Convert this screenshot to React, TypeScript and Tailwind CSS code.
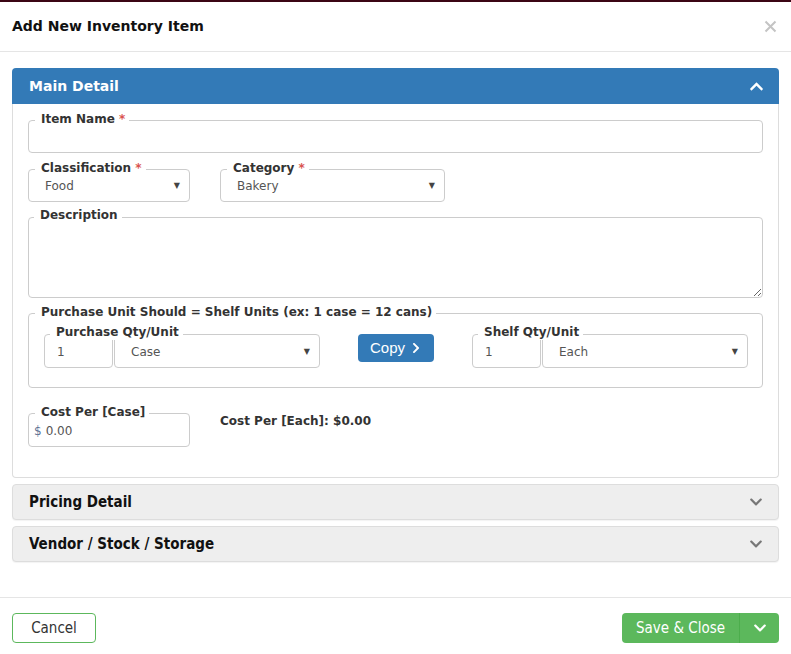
import React from "react";
import { FaChevronUp, FaChevronDown, FaChevronRight } from "react-icons/fa";

const condensed = "font-['DejaVu_Sans_Condensed','Liberation_Sans_Narrow',sans-serif]";

function Legend({ label, required }: { label: string; required?: boolean }) {
  return (
    <span className="absolute -top-[10px] left-[6px] bg-white pl-[6px] pr-[4px] text-[12px] font-bold leading-[16px] text-[#333] whitespace-nowrap">
      {label}
      {required && <span className="text-[#d9534f]"> *</span>}
    </span>
  );
}

function SelectBox({ value, className }: { value: string; className?: string }) {
  return (
    <div className={`flex items-center justify-between h-full pl-[16px] pr-[9px] text-[12px] text-[#555] ${className ?? ""}`}>
      <span>{value}</span>
      <span className="text-[8px] text-[#444]">▼</span>
    </div>
  );
}

function QtyUnit({ label, qty, unit }: { label: string; qty: string; unit: string }) {
  return (
    <div className="relative flex w-[276px] h-[34px]">
      <div className="w-[69px] h-full border border-[#ccc] rounded-[4px] flex items-center pl-[12px] pt-[2px] text-[12px] text-[#555]">
        {qty}
      </div>
      <div className="flex-1 ml-[1px] h-full border border-[#ccc] rounded-[4px] pt-[2px]">
        <SelectBox value={unit} />
      </div>
      <Legend label={label} />
    </div>
  );
}

function CollapsedPanel({ title }: { title: string }) {
  return (
    <div className="mt-[6px] h-[36px] bg-[#eee] border border-[#ddd] rounded-[4px] shadow-[0_1px_1px_rgba(0,0,0,0.05)] flex items-center justify-between pl-[16px] pr-[15px]">
      <span className={`${condensed} font-bold text-[15px] text-[#111]`}>{title}</span>
      <FaChevronDown className="text-[#777]" size={14} />
    </div>
  );
}

export default function App() {
  return (
    <div className="w-[791px] h-[654px] bg-white flex flex-col border-t-2 border-[#3b0514] font-['DejaVu_Sans',sans-serif]">
      {/* header */}
      <div className="h-[50px] border-b border-[#e5e5e5] flex items-center justify-between px-[12px]">
        <h4 className="text-[14px] font-bold text-[#111]">Add New Inventory Item</h4>
        <svg width="13" height="13" viewBox="0 0 13 13" className="mr-[2px]">
          <path d="M1.5 1.5 L11.5 11.5 M11.5 1.5 L1.5 11.5" stroke="#c4c4c4" strokeWidth="2" />
        </svg>
      </div>

      {/* body */}
      <div className="flex-1 px-[12px] pt-[16px]">
        <div className="rounded-[4px]">
          <div className="h-[36px] bg-[#337ab7] rounded-t-[4px] flex items-center justify-between pl-[17px] pr-[15px]">
            <span className="text-[14px] font-bold text-white">Main Detail</span>
            <FaChevronUp className="text-white" size={15} />
          </div>
          <div className="border-x border-b border-[#ddd] rounded-b-[4px] px-[15px] pt-[16px] pb-[30px]">
            <div className="relative h-[33px] border border-[#ccc] rounded-[4px]">
              <Legend label="Item Name" required />
            </div>

            <div className="flex mt-[16px]">
              <div className="relative w-[162px] h-[33px] border border-[#ccc] rounded-[4px]">
                <SelectBox value="Food" />
                <Legend label="Classification" required />
              </div>
              <div className="relative w-[225px] h-[33px] ml-[30px] border border-[#ccc] rounded-[4px]">
                <SelectBox value="Bakery" />
                <Legend label="Category" required />
              </div>
            </div>

            <div className="relative mt-[15px]">
              <textarea className="block w-full h-[81px] border border-[#ccc] rounded-[4px] outline-none" />
              <Legend label="Description" />
            </div>

            <div className="relative mt-[15px] h-[75px] border border-[#ccc] rounded-[4px] pl-[15px] pt-[20px]">
              <Legend label="Purchase Unit Should = Shelf Units (ex: 1 case = 12 cans)" />
              <div className="flex items-start">
                <QtyUnit label="Purchase Qty/Unit" qty="1" unit="Case" />
                <button className="ml-[38px] w-[76px] h-[28px] bg-[#337ab7] rounded-[4px] text-white text-[15px] font-['Liberation_Sans',sans-serif] flex items-center justify-center gap-[5px]">
                  Copy
                  <FaChevronRight size={12} />
                </button>
                <div className="ml-[38px]">
                  <QtyUnit label="Shelf Qty/Unit" qty="1" unit="Each" />
                </div>
              </div>
            </div>

            <div className="flex items-start mt-[25px]">
              <div className="relative w-[162px] h-[34px] border border-[#ccc] rounded-[4px] flex items-center pl-[5px] text-[12px] pt-[2px]">
                <span className="text-[#5f7394]">$</span>
                <span className="ml-[4px] text-[#555]">0.00</span>
                <Legend label="Cost Per [Case]" />
              </div>
              <div className="ml-[30px] leading-[16px] text-[12px] font-bold text-[#333]">
                Cost Per [Each]: $0.00
              </div>
            </div>
          </div>
        </div>

        <CollapsedPanel title="Pricing Detail" />
        <CollapsedPanel title="Vendor / Stock / Storage" />
      </div>

      {/* footer */}
      <div className="h-[57px] border-t border-[#e5e5e5] px-[12px] pt-[15px] flex items-start justify-between">
        <button className={`w-[84px] h-[30px] border border-[#5cb85c] rounded-[4px] text-[15px] text-[#333] bg-white ${condensed}`}>
          Cancel
        </button>
        <div className="w-[157px] h-[30px] flex bg-[#5cb85c] rounded-[4px] text-white">
          <button className={`w-[118px] h-full border-r border-[#4cae4c] text-[15px] ${condensed}`}>
            Save &amp; Close
          </button>
          <button className="flex-1 h-full flex items-center justify-center">
            <FaChevronDown size={14} />
          </button>
        </div>
      </div>
    </div>
  );
}
